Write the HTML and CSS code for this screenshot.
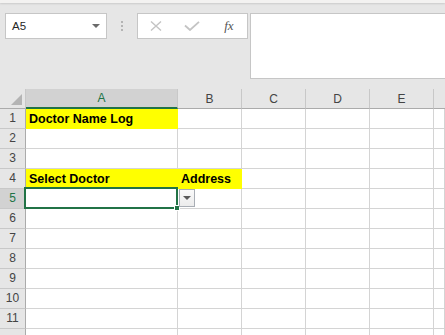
FILE: index.html
```html
<!DOCTYPE html>
<html>
<head>
<meta charset="utf-8">
<link rel="stylesheet" href="styles.css">
</head>
<body>
<div class="app">
  <div class="topbar"></div>
  <div class="formula-row">
    <div class="namebox"><span class="ref">A5</span><span class="nb-arrow"></span></div>
    <div class="sep"><i></i><i></i><i></i></div>
    <div class="fbtns">
      <span class="slot"><svg width="12" height="10" viewBox="0 0 12 10"><path d="M1 0.5 L11 9.5 M11 0.5 L1 9.5" stroke="#c4c4c4" stroke-width="1.4" fill="none"/></svg></span>
      <span class="slot"><svg width="16" height="10" viewBox="0 0 16 10"><path d="M1 4.5 L6 9 L15 0.8" stroke="#c4c4c4" stroke-width="1.8" fill="none"/></svg></span>
      <span class="slot fx">fx</span>
    </div>
    <div class="finput"></div>
  </div>
  <div class="sheet">
    <div class="corner"><span class="tri"></span></div>
    <div class="ch sel">A</div><div class="ch">B</div><div class="ch">C</div><div class="ch">D</div><div class="ch">E</div><div class="ch last"></div>

    <div class="rh">1</div><div class="c yel">Doctor Name Log</div><div class="c"></div><div class="c"></div><div class="c"></div><div class="c"></div><div class="c"></div>
    <div class="rh">2</div><div class="c"></div><div class="c"></div><div class="c"></div><div class="c"></div><div class="c"></div><div class="c"></div>
    <div class="rh">3</div><div class="c"></div><div class="c"></div><div class="c"></div><div class="c"></div><div class="c"></div><div class="c"></div>
    <div class="rh">4</div><div class="c yel">Select Doctor</div><div class="c yel">Address</div><div class="c"></div><div class="c"></div><div class="c"></div><div class="c"></div>
    <div class="rh sel">5</div><div class="c active"><span class="handle"></span><span class="dd"><span class="dd-arrow"></span></span></div><div class="c"></div><div class="c"></div><div class="c"></div><div class="c"></div><div class="c"></div>
    <div class="rh">6</div><div class="c"></div><div class="c"></div><div class="c"></div><div class="c"></div><div class="c"></div><div class="c"></div>
    <div class="rh">7</div><div class="c"></div><div class="c"></div><div class="c"></div><div class="c"></div><div class="c"></div><div class="c"></div>
    <div class="rh">8</div><div class="c"></div><div class="c"></div><div class="c"></div><div class="c"></div><div class="c"></div><div class="c"></div>
    <div class="rh">9</div><div class="c"></div><div class="c"></div><div class="c"></div><div class="c"></div><div class="c"></div><div class="c"></div>
    <div class="rh">10</div><div class="c"></div><div class="c"></div><div class="c"></div><div class="c"></div><div class="c"></div><div class="c"></div>
    <div class="rh">11</div><div class="c"></div><div class="c"></div><div class="c"></div><div class="c"></div><div class="c"></div><div class="c"></div>
    <div class="rh"></div><div class="c"></div><div class="c"></div><div class="c"></div><div class="c"></div><div class="c"></div><div class="c"></div>
  </div>
</div>
</body>
</html>
```
FILE: styles.css
```css
* { box-sizing: border-box; }
html, body { margin: 0; padding: 0; }
body {
  width: 445px;
  height: 335px;
  overflow: hidden;
  background: #e6e6e6;
  font-family: "Liberation Sans", Arial, sans-serif;
}
.app { width: 445px; height: 335px; overflow: hidden; }
.topbar {
  height: 3px;
  background: #f3f2f1;
  box-shadow: 0 1px 2px rgba(0,0,0,0.12);
  position: relative;
}
.formula-row {
  display: flex;
  align-items: flex-start;
  padding-top: 10px;
  height: 76px;
  margin-bottom: 10px;
}
.formula-row > * { flex: none; }
.namebox {
  margin-left: 5px;
  width: 102px;
  height: 26px;
  background: #fff;
  border: 1px solid #c6c6c6;
  display: flex;
  align-items: center;
  justify-content: space-between;
  padding: 0 6px 0 6px;
}
.ref { font-size: 11.5px; color: #262626; }
.nb-arrow {
  width: 0; height: 0;
  border-left: 4px solid transparent;
  border-right: 4px solid transparent;
  border-top: 4px solid #6a6a6a;
}
.sep {
  width: 30px;
  height: 26px;
  display: flex;
  flex-direction: column;
  align-items: center;
  justify-content: center;
  gap: 2px;
}
.sep i {
  display: block;
  width: 2px;
  height: 2px;
  background: #b4b4b4;
}
.fbtns {
  width: 111px;
  height: 26px;
  background: #fff;
  border: 1px solid #c6c6c6;
  display: flex;
}
.slot {
  flex: 1;
  display: flex;
  align-items: center;
  justify-content: center;
}
.slot svg { display: block; }
.fx {
  font-family: "Liberation Serif", "Times New Roman", serif;
  font-style: italic;
  font-size: 13px;
  color: #555;
  padding-bottom: 1px;
}
.finput {
  margin-left: 2px;
  width: 210px;
  height: 66px;
  background: #fff;
  border: 1px solid #c6c6c6;
}
.sheet {
  display: grid;
  grid-template-columns: 26px 152px 64px 64px 64px 64px 1fr;
  grid-auto-rows: 20px;
  background: #fff;
}
.corner {
  background: #e6e6e6;
  border-right: 1px solid #c8c8c8;
  border-bottom: 1px solid #ababab;
  position: relative;
}
.tri {
  position: absolute;
  right: 3px;
  bottom: 3px;
  width: 0; height: 0;
  border-left: 11px solid transparent;
  border-bottom: 11px solid #b4b4b4;
}
.ch {
  background: #e6e6e6;
  border-right: 1px solid #c8c8c8;
  border-bottom: 1px solid #ababab;
  display: flex;
  align-items: center;
  justify-content: center;
  font-size: 12px;
  color: #444;
}
.ch.sel {
  background: #d2d2d2;
  color: #217346;
  border-bottom: 2px solid #217346;
}
.ch.last { border-right: none; }
.rh {
  background: #e6e6e6;
  border-right: 1px solid #ababab;
  border-bottom: 1px solid #c8c8c8;
  display: flex;
  align-items: flex-end;
  justify-content: center;
  padding-bottom: 2px;
  font-size: 12px;
  line-height: 15px;
  color: #444;
}
.rh.sel {
  background: #d2d2d2;
  color: #217346;
}
.c {
  border-right: 1px solid #d4d4d4;
  border-bottom: 1px solid #d4d4d4;
  display: flex;
  align-items: flex-end;
  padding: 0 0 1px 3px;
  font-size: 12.5px;
  line-height: 15px;
  font-weight: bold;
  color: #000;
  white-space: nowrap;
  position: relative;
}
.c.yel {
  background: #ffff00;
  border-right-color: #ffff00;
  border-bottom-color: #ffff00;
}
.c.active::after {
  content: "";
  position: absolute;
  top: -2px;
  left: -2px;
  right: -1px;
  bottom: -1px;
  border: 2px solid #217346;
  z-index: 2;
}
.handle {
  position: absolute;
  right: -3px;
  bottom: -3px;
  width: 6px;
  height: 6px;
  background: #217346;
  border: 1px solid #fff;
  z-index: 3;
}
.dd {
  position: absolute;
  left: 153px;
  top: 0px;
  width: 16px;
  height: 18px;
  background: linear-gradient(#fafafa, #ececec);
  border: 1px solid #a9aeb5;
  display: flex;
  align-items: center;
  justify-content: center;
  z-index: 3;
}
.dd-arrow {
  width: 0; height: 0;
  border-left: 4px solid transparent;
  border-right: 4px solid transparent;
  border-top: 4px solid #5a5a5a;
}
```
